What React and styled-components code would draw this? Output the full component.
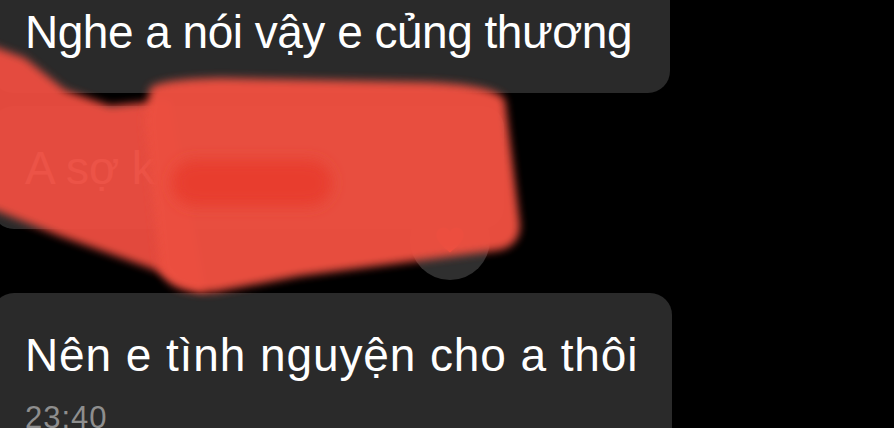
import React from "react";
import styled, { createGlobalStyle } from "styled-components";

const GlobalStyle = createGlobalStyle`
  html, body {
    margin: 0;
    padding: 0;
    background: #000;
  }
  body {
    font-family: "Liberation Sans", Arial, sans-serif;
  }
`;

const Screen = styled.div`
  position: relative;
  width: 894px;
  height: 428px;
  overflow: hidden;
  background: #000;
`;

const Thread = styled.div`
  display: flex;
  flex-direction: column;
  align-items: flex-start;
  margin-top: -30px;
  margin-left: -8px;
`;

const Row = styled.div`
  position: relative;
  margin-top: ${(p) => p.$gap || 0}px;
`;

const Bubble = styled.div`
  box-sizing: border-box;
  width: ${(p) => p.$width}px;
  background: #2a2a2a;
  border-radius: 22px;
  padding: 37px 24px 36px 33px;
  color: #fff;
  font-size: 46px;
  line-height: 50px;
  letter-spacing: ${(p) => p.$tracking || 0}px;
  white-space: nowrap;
`;

const Time = styled.div`
  margin-top: 21px;
  font-size: 31px;
  line-height: 34px;
  letter-spacing: 1px;
  color: #8e8e8e;
`;

const Reaction = styled.div`
  position: absolute;
  left: 418px;
  top: 94px;
  width: 80px;
  height: 80px;
  border-radius: 50%;
  background: #2f2f2f;
  display: flex;
  align-items: center;
  justify-content: center;
`;

const Scribble = styled.svg`
  position: absolute;
  left: 0;
  top: 0;
  pointer-events: none;
`;

function Heart() {
  return (
    <svg width="30" height="28" viewBox="0 0 24 22">
      <path
        d="M12 21 C5 15 1 11.5 1 6.8 C1 3.5 3.6 1 6.8 1 C9 1 10.9 2.2 12 4 C13.1 2.2 15 1 17.2 1 C20.4 1 23 3.5 23 6.8 C23 11.5 19 15 12 21 Z"
        fill="#ec4b3c"
      />
    </svg>
  );
}

export default function App() {
  return (
    <Screen>
      <GlobalStyle />
      <Thread>
        <Row>
          <Bubble $width={678} $tracking={-0.5}>
            Nghe a nói vậy e củng thương
          </Bubble>
        </Row>
        <Row $gap={13}>
          <Bubble $width={512}>A sợ k</Bubble>
          <Reaction>
            <Heart />
          </Reaction>
        </Row>
        <Row $gap={64}>
          <Bubble $width={680} $tracking={0.9}>
            Nên e tình nguyện cho a thôi
            <Time>23:40</Time>
          </Bubble>
        </Row>
      </Thread>

      <Scribble width="894" height="428" viewBox="0 0 894 428">
        <defs>
          <filter id="soft" x="-20%" y="-20%" width="140%" height="140%">
            <feGaussianBlur stdDeviation="4" />
          </filter>
          <filter id="softer" x="-20%" y="-40%" width="140%" height="180%">
            <feGaussianBlur stdDeviation="7" />
          </filter>
        </defs>
        <path
          d="M-10 45 L25 58 L65 90 L110 106 L170 100 L205 292 L150 268 L60 236 L-10 208 Z"
          fill="#ec4e40"
          opacity="0.96"
          filter="url(#soft)"
        />
        <path
          d="M150 88 Q160 79 220 78 L420 82 Q495 84 505 100 L520 225 Q520 245 500 250 L300 276 L215 292 Q170 295 160 270 L145 120 Z"
          fill="#ec5041"
          opacity="0.98"
          filter="url(#soft)"
        />
        <rect
          x="172"
          y="160"
          width="160"
          height="46"
          rx="23"
          fill="#e83d2d"
          filter="url(#softer)"
        />
      </Scribble>
    </Screen>
  );
}
